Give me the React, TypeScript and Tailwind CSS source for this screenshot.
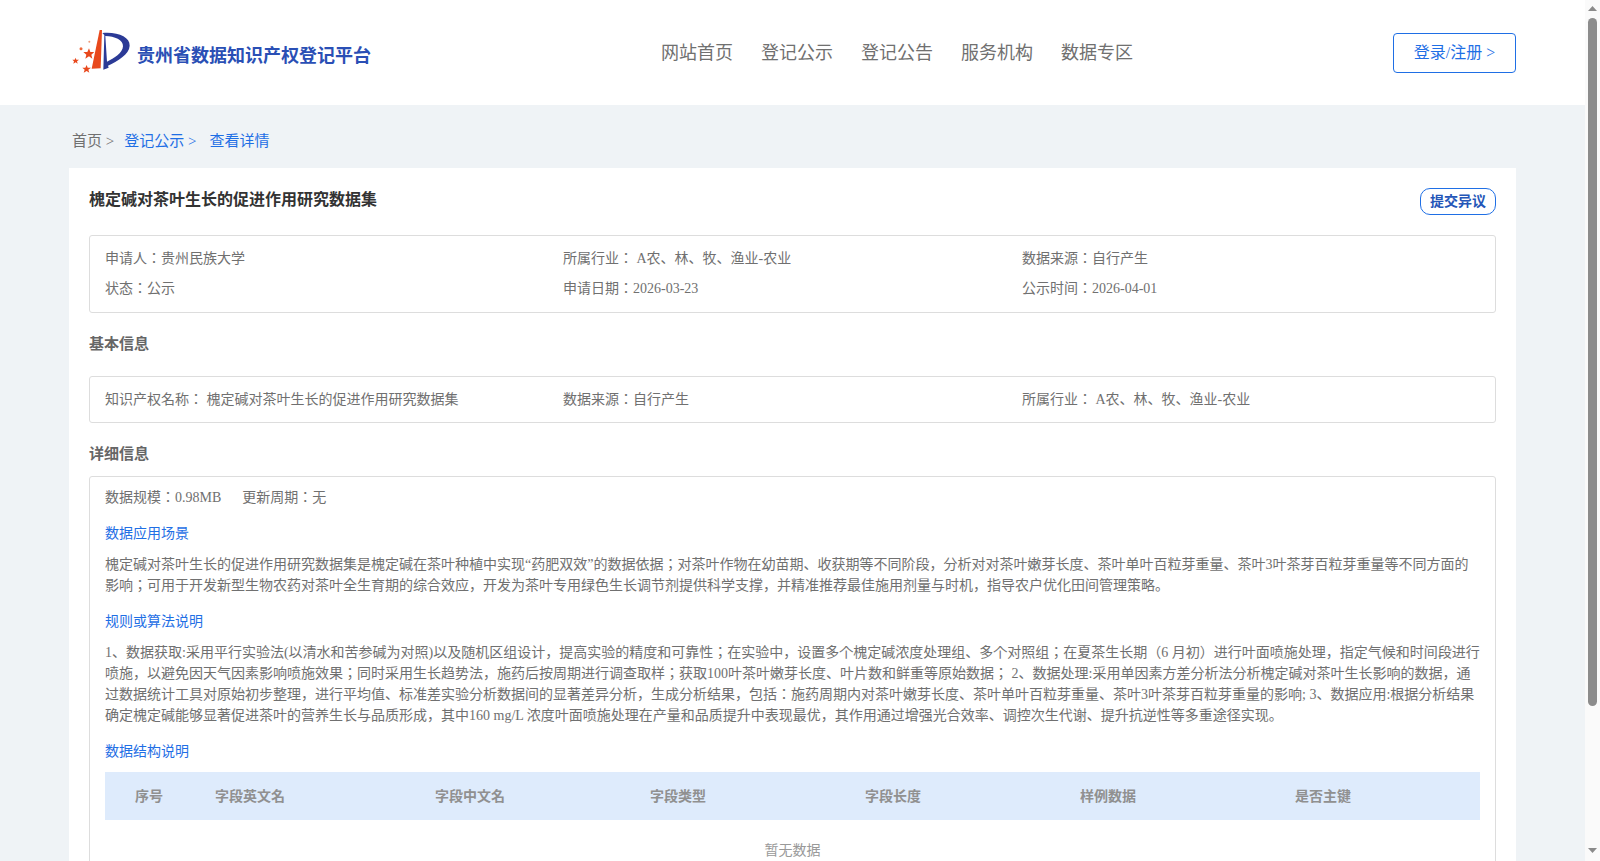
const blue = "text-[#1f6fe5]";

function Logo() {
  return (
    <svg className="shrink-0 w-[66px] h-[56px]" viewBox="0 0 198 168" fill="none">
      <path d="M95 15 L102 15 L98 130 L71 131 Z" fill="#e8481c" />
      <path d="M103 24 C150 20 186 36 185 62 C184 88 148 108 120 122 L122 128 L106 134 L109 30 Z" fill="#2b3a96" />
      <path d="M112 33 C140 34 166 44 165 64 C164 84 138 100 117 110 Z" fill="#ffffff" />
      <path d="M63 70 L67 81 L79 81 L70 89 L73 101 L63 94 L52 101 L55 89 L46 81 L58 81 Z" fill="#e8481c" />
      <path d="M23 98 L25 104 L33 104 L27 109 L29 116 L23 112 L16 116 L18 109 L13 104 L20 104 Z" fill="#e8481c" />
      <path d="M56 120 L59 128 L69 128 L61 134 L64 143 L56 138 L47 143 L50 134 L43 128 L52 128 Z" fill="#e8481c" />
      <circle cx="39" cy="71" r="4.5" fill="#ef6a3e" />
      <circle cx="64" cy="50" r="3" fill="#ef9a7a" />
    </svg>
  );
}

function Scrollbar() {
  return (
    <div className="w-[15px] h-[861px] shrink-0 bg-[#fafafa] flex flex-col items-center">
      <svg className="w-[9px] h-[5px] mt-[6px] shrink-0" viewBox="0 0 9 5"><path d="M4.5 0 L9 5 L0 5 Z" fill="#8a8a8a" /></svg>
      <div className="w-[9px] h-[688px] mt-[7px] rounded-[5px] bg-[#8c8c8c]" />
      <svg className="w-[9px] h-[5px] mt-auto mb-[8px] shrink-0" viewBox="0 0 9 5"><path d="M0 0 L9 0 L4.5 5 Z" fill="#8a8a8a" /></svg>
    </div>
  );
}

function Field({ children }: { children: React.ReactNode }) {
  return <div className="h-[30px] leading-[30px] whitespace-nowrap">{children}</div>;
}

function SectionTitle({ children }: { children: React.ReactNode }) {
  return <div className="text-[15px] font-bold text-[#666666] leading-[21px]">{children}</div>;
}

function SubTitle({ children }: { children: React.ReactNode }) {
  return <div className={`${blue} text-[14px] leading-[21px]`}>{children}</div>;
}

const columns = [
  { label: "序号", cls: "w-[90px] pl-[30px]" },
  { label: "字段英文名", cls: "w-[220px] pl-[20px]" },
  { label: "字段中文名", cls: "w-[215px] pl-[20px]" },
  { label: "字段类型", cls: "w-[215px] pl-[20px]" },
  { label: "字段长度", cls: "w-[215px] pl-[20px]" },
  { label: "样例数据", cls: "w-[215px] pl-[20px]" },
  { label: "是否主键", cls: "flex-1 pl-[20px]" },
];

export default function App() {
  return (
    <div className="flex h-[861px] overflow-hidden">
      <div className="flex-1 min-w-0 bg-[#eff3f6] text-[14px] text-[#707070] font-['Liberation_Serif','Noto_Sans_CJK_JP',serif]">
        <header className="bg-white h-[105px] flex items-center pl-[68px] pr-[69px]">
          <div className="flex items-center w-[593px]">
            <Logo />
            <span className="ml-[3px] mt-[7px] text-[18px] font-bold text-[#2a4fb5] font-['Liberation_Sans','Noto_Sans_CJK_JP',sans-serif]">贵州省数据知识产权登记平台</span>
          </div>
          <nav className="flex gap-[28px] text-[18px] mt-[1px]">
            <span>网站首页</span>
            <span>登记公示</span>
            <span>登记公告</span>
            <span>服务机构</span>
            <span>数据专区</span>
          </nav>
          <button className={`ml-auto w-[123px] h-[40px] border border-[#1f6fe5] rounded-[4px] text-[16px] bg-white ${blue}`}>登录/注册 &gt;</button>
        </header>

        <div className="h-[63px] pl-[72px] pt-[25px] text-[15px] leading-[22px]">
          <span>首页 &gt;</span>
          <span className={`${blue} ml-[10px]`}>登记公示 &gt;</span>
          <span className={`${blue} ml-[13px]`}>查看详情</span>
        </div>

        <main className="bg-white ml-[69px] w-[1447px] px-[20px] pt-[20px] pb-[40px]">
          <div className="flex items-start justify-between h-[47px]">
            <h1 className="text-[16px] font-bold text-[#333333] leading-[24px]">槐定碱对茶叶生长的促进作用研究数据集</h1>
            <button className="w-[76px] h-[27px] border border-[#1f6fe5] rounded-[10px] text-[14px] font-bold text-[#2456b8] leading-none">提交异议</button>
          </div>

          <div className="border border-[#dddddd] rounded-[3px] h-[78px] px-[15px] py-[8px] grid grid-cols-[458px_459px_1fr]">
            <Field>申请人：贵州民族大学</Field>
            <Field>所属行业： A农、林、牧、渔业-农业</Field>
            <Field>数据来源：自行产生</Field>
            <Field>状态：公示</Field>
            <Field>申请日期：2026-03-23</Field>
            <Field>公示时间：2026-04-01</Field>
          </div>

          <div className="mt-[21px] mb-[21px]">
            <SectionTitle>基本信息</SectionTitle>
          </div>

          <div className="border border-[#dddddd] rounded-[3px] h-[47px] px-[15px] py-[8px] grid grid-cols-[458px_459px_1fr]">
            <Field>知识产权名称： 槐定碱对茶叶生长的促进作用研究数据集</Field>
            <Field>数据来源：自行产生</Field>
            <Field>所属行业： A农、林、牧、渔业-农业</Field>
          </div>

          <div className="mt-[21px] mb-[11px]">
            <SectionTitle>详细信息</SectionTitle>
          </div>

          <div className="border border-[#dddddd] rounded-[3px] px-[15px] pt-[10px] pb-[20px]">
            <div className="leading-[21px]">
              <span>数据规模：0.98MB</span>
              <span className="ml-[21px]">更新周期：无</span>
            </div>
            <div className="mt-[15px]"><SubTitle>数据应用场景</SubTitle></div>
            <p className="mt-[10px] leading-[21px]">
              槐定碱对茶叶生长的促进作用研究数据集是槐定碱在茶叶种植中实现“药肥双效”的数据依据；对茶叶作物在幼苗期、收获期等不同阶段，分析对对茶叶嫩芽长度、茶叶单叶百粒芽重量、茶叶3叶茶芽百粒芽重量等不同方面的影响；可用于开发新型生物农药对茶叶全生育期的综合效应，开发为茶叶专用绿色生长调节剂提供科学支撑，并精准推荐最佳施用剂量与时机，指导农户优化田间管理策略。
            </p>
            <div className="mt-[15px]"><SubTitle>规则或算法说明</SubTitle></div>
            <p className="mt-[10px] leading-[21px]">
              1、数据获取:采用平行实验法(以清水和苦参碱为对照)以及随机区组设计，提高实验的精度和可靠性；在实验中，设置多个槐定碱浓度处理组、多个对照组；在夏茶生长期（6 月初）进行叶面喷施处理，指定气候和时间段进行喷施，以避免因天气因素影响喷施效果；同时采用生长趋势法，施药后按周期进行调查取样；获取100叶茶叶嫩芽长度、叶片数和鲜重等原始数据； 2、数据处理:采用单因素方差分析法分析槐定碱对茶叶生长影响的数据，通过数据统计工具对原始初步整理，进行平均值、标准差实验分析数据间的显著差异分析，生成分析结果，包括：施药周期内对茶叶嫩芽长度、茶叶单叶百粒芽重量、茶叶3叶茶芽百粒芽重量的影响; 3、数据应用:根据分析结果确定槐定碱能够显著促进茶叶的营养生长与品质形成，其中160 mg/L 浓度叶面喷施处理在产量和品质提升中表现最优，其作用通过增强光合效率、调控次生代谢、提升抗逆性等多重途径实现。
            </p>
            <div className="mt-[15px]"><SubTitle>数据结构说明</SubTitle></div>
            <div className="mt-[10px] bg-[#deebfc] h-[48px] flex items-center font-bold text-[#909090]">
              {columns.map((c) => (
                <div key={c.label} className={c.cls}>{c.label}</div>
              ))}
            </div>
            <div className="h-[60px] flex items-center justify-center text-[#999999]">暂无数据</div>
          </div>
        </main>
      </div>
      <Scrollbar />
    </div>
  );
}
